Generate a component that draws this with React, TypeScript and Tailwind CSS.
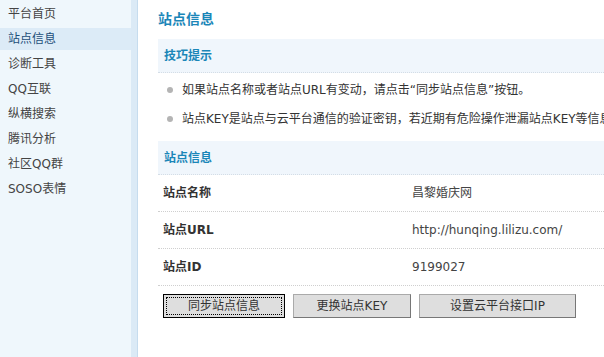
const menu = ["平台首页", "站点信息", "诊断工具", "QQ互联", "纵横搜索", "腾讯分析", "社区QQ群", "SOSO表情"];

const rows = [
  { label: "站点名称", value: "昌黎婚庆网" },
  { label: "站点URL", value: "http://hunqing.lilizu.com/" },
  { label: "站点ID", value: "9199027" },
];

export default function App() {
  return (
    <div className="flex h-[357px] w-[604px] overflow-hidden bg-white text-[12px] text-[#333] [font-family:'DejaVu_Sans','Noto_Sans_CJK_SC',sans-serif]">
      <div className="flex w-[138px] shrink-0">
        <div className="w-[131px] bg-[#eff7fc] pt-[3px]">
          {menu.map((item, i) => (
            <div
              key={item}
              className={`mb-[3px] flex h-[22px] items-center pl-[8px] ${
                i === 1 ? "bg-[#dcebf7] text-[#1d4f7a]" : "text-[#444]"
              }`}
            >
              {item}
            </div>
          ))}
        </div>
        <div className="w-[6px] bg-[#dbeaf6]" />
        <div className="w-[1px] bg-[#c6dcee]" />
      </div>

      <div className="w-[700px] shrink-0 pl-[20px] pt-[9px]">
        <h1 className="h-[30px] text-[14px] font-bold leading-[20px] text-[#1b86b8]">站点信息</h1>

        <div className="flex h-[34px] items-center border-b border-dotted border-[#d4dde6] bg-[#f0f6fc] pl-[6px] font-bold text-[#1b86b8]">
          技巧提示
        </div>
        <ul className="pb-[8px] pt-[2px]">
          <li className="flex h-[29px] items-center">
            <span className="ml-[9px] mr-[9px] h-[6px] w-[6px] rounded-full bg-[#b4b4b4]" />
            如果站点名称或者站点URL有变动，请点击“同步站点信息”按钮。
          </li>
          <li className="flex h-[29px] items-center whitespace-nowrap">
            <span className="ml-[9px] mr-[9px] h-[6px] w-[6px] rounded-full bg-[#b4b4b4]" />
            站点KEY是站点与云平台通信的验证密钥，若近期有危险操作泄漏站点KEY等信息，请点击“更换站点KEY”按钮。
          </li>
        </ul>

        <div className="flex h-[34px] items-center border-b border-dotted border-[#d4dde6] bg-[#f0f6fc] pl-[6px] font-bold text-[#1b86b8]">
          站点信息
        </div>
        {rows.map((r) => (
          <div key={r.label} className="flex h-[37px] items-center border-b border-dotted border-[#cfcfcf]">
            <div className="w-[254px] pl-[5px] font-bold text-[#333]">{r.label}</div>
            <div className="text-[#444]">{r.value}</div>
          </div>
        ))}

        <div className="flex gap-[8px] pl-[5px] pt-[8px]">
          <button className="flex h-[24px] w-[122px] items-center justify-center border border-black bg-[#dedede] p-[2px]">
            <span className="flex h-full w-full items-center justify-center border border-dotted border-black">
              同步站点信息
            </span>
          </button>
          <button className="h-[24px] w-[118px] border border-[#aaa] border-b-[#777] border-r-[#777] bg-[#dedede]">
            更换站点KEY
          </button>
          <button className="h-[24px] w-[157px] border border-[#aaa] border-b-[#777] border-r-[#777] bg-[#dedede]">
            设置云平台接口IP
          </button>
        </div>
      </div>
    </div>
  );
}
